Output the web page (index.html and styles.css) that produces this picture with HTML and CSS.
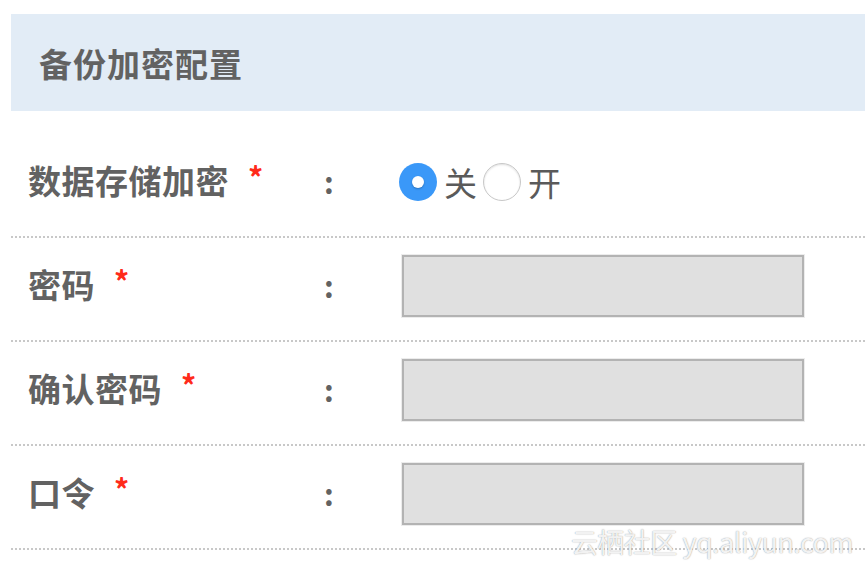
FILE: index.html
```html
<!DOCTYPE html>
<html lang="zh">
<head>
<meta charset="utf-8">
<link rel="stylesheet" href="styles.css">
</head>
<body>
<div class="page">
  <div class="panel-head">备份加密配置</div>
  <div class="form">
    <div class="row row-first">
      <div class="label">数据存储加密<span class="req">*</span></div>
      <div class="colon">:</div>
      <div class="value radios">
        <span class="radio checked"></span><span class="opt">关</span>
        <span class="radio"></span><span class="opt">开</span>
      </div>
    </div>
    <div class="row">
      <div class="label">密码<span class="req">*</span></div>
      <div class="colon">:</div>
      <div class="value"><div class="input"></div></div>
    </div>
    <div class="row">
      <div class="label">确认密码<span class="req">*</span></div>
      <div class="colon">:</div>
      <div class="value"><div class="input"></div></div>
    </div>
    <div class="row">
      <div class="label">口令<span class="req">*</span></div>
      <div class="colon">:</div>
      <div class="value"><div class="input"></div></div>
    </div>
  </div>
  <div class="watermark">云栖社区 yq.aliyun.com</div>
</div>
</body>
</html>
```
FILE: styles.css
```css
html, body {
  margin: 0;
  padding: 0;
  background: #fff;
}
body {
  font-family: "Noto Sans CJK SC", "Noto Sans", sans-serif;
  color: #666;
}
.page {
  position: relative;
  width: 865px;
  height: 573px;
  overflow: hidden;
  padding: 14px 0 0 11px;
  box-sizing: border-box;
}
.panel-head {
  height: 97px;
  background: #e2ecf6;
  display: flex;
  align-items: center;
  padding-left: 28px;
  font-size: 33px;
  font-weight: 700;
  color: #626262;
  letter-spacing: 1px;
}
.row {
  display: flex;
  align-items: center;
  padding: 17px 0 23px 17px;
  border-bottom: 2px dotted #c8c8c8;
}
.row-first {
  padding-top: 40px;
  padding-bottom: 23px;
}
.label {
  width: 296px;
  flex: none;
  font-size: 33px;
  font-weight: 700;
  color: #626262;
  letter-spacing: 0.5px;
  display: flex;
  align-items: center;
  white-space: nowrap;
  margin-top: -5px;
}
.req {
  color: #ff2a1a;
  font-size: 30px;
  margin-left: 19px;
  position: relative;
  top: -4px;
}
.colon {
  width: 75px;
  flex: none;
  font-size: 30px;
  font-weight: 700;
  color: #626262;
  margin-top: -3px;
}
.value {
  display: flex;
  align-items: center;
  height: 62px;
}
.radios .opt {
  font-size: 33px;
  color: #5a5a5a;
  line-height: 1;
  margin: 0 6px 0 7px;
}
.radio {
  width: 38px;
  height: 38px;
  border-radius: 50%;
  box-sizing: border-box;
  border: 1px solid #c8c8c8;
  background: #fff;
  box-shadow: inset 0 1px 2px rgba(0,0,0,0.12);
  position: relative;
}
.radio.checked {
  border: none;
  background: #3a98f8;
  box-shadow: none;
}
.radio.checked::after {
  content: "";
  position: absolute;
  left: 13px;
  top: 13px;
  width: 12px;
  height: 12px;
  border-radius: 50%;
  background: #fff;
  box-shadow: 0 1px 2px rgba(0,0,0,0.25);
}
.input {
  margin-left: 3px;
  width: 402px;
  height: 62px;
  box-sizing: border-box;
  background: #e0e0e0;
  border: 2px solid #b3b3b3;
  outline: 1px solid #ececec;
}
.watermark {
  position: absolute;
  right: 12px;
  bottom: 12px;
  font-size: 27px;
  color: rgba(255,255,255,0.9);
  text-shadow: 0 0 1px rgba(0,0,0,0.35), 0 0 2px rgba(0,0,0,0.15);
  font-family: "Noto Sans CJK SC", "Liberation Sans", sans-serif;
  letter-spacing: -0.5px;
}
```
